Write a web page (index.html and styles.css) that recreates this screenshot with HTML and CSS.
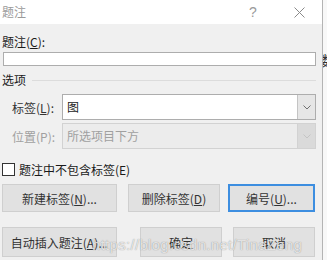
FILE: index.html
```html
<!DOCTYPE html>
<html>

<head>
    <title>题注</title>
    <link rel="stylesheet" href="styles.css">
</head>

<body>
    <div class="screen">
        <div class="dialog">
            <div class="titlebar">
                <span class="title">题注</span>
                <span class="help">?</span>
                <span class="close">
                    <svg width="11" height="11" viewBox="0 0 11 11">
                        <path d="M0.5 0.5 L10.5 10.5 M10.5 0.5 L0.5 10.5" stroke="#8a8a8a" stroke-width="1" fill="none"/>
                    </svg>
                </span>
            </div>
            <div class="content">
                <div class="caption-label">题注(<u>C</u>):</div>
                <div class="caption-input"></div>

                <div class="section">
                    <span>选项</span>
                    <span class="section-line"></span>
                </div>

                <div class="option-row">
                    <span class="option-label">标签(<u>L</u>):</span>
                    <div class="select">
                        <span class="select-text">图</span>
                        <span class="select-btn">
                            <svg width="8" height="5" viewBox="0 0 8 5"><path d="M0.5 0.5 L4 4 L7.5 0.5" stroke="#707070" fill="none"/></svg>
                        </span>
                    </div>
                </div>
                <div class="option-row second disabled">
                    <span class="option-label">位置(P):</span>
                    <div class="select">
                        <span class="select-text">所选项目下方</span>
                        <span class="select-btn">
                            <svg width="8" height="5" viewBox="0 0 8 5"><path d="M0.5 0.5 L4 4 L7.5 0.5" stroke="#c4c4c4" fill="none"/></svg>
                        </span>
                    </div>
                </div>

                <div class="check-row">
                    <span class="checkbox"></span>
                    <span>题注中不包含标签(E)</span>
                </div>

                <div class="button-row first">
                    <div class="btn b-new">新建标签(<u>N</u>)...</div>
                    <div class="btn b-del">删除标签(<u>D</u>)</div>
                    <div class="btn b-num focused">编号(<u>U</u>)...</div>
                </div>
                <div class="button-row last">
                    <div class="btn b-auto">自动插入题注(<u>A</u>)...</div>
                    <div class="btn b-ok">确定</div>
                    <div class="btn b-cancel">取消</div>
                </div>

                <div class="watermark">https://blog.csdn.net/TinaZeng</div>
            </div>
        </div>
        <div class="outside">
            <span class="peek">数</span>
        </div>
    </div>
</body>

</html>
```

FILE: styles.css
```css
body {
    margin: 0;
    font-family: "Noto Sans CJK SC", "Liberation Sans", sans-serif;
    font-size: 12px;
    color: #1a1a1a;
}

.screen {
    display: flex;
    width: 327px;
    height: 260px;
    overflow: hidden;
}

.dialog {
    width: 322px;
    height: 260px;
    background: #f0f0f0;
    border-right: 1px solid #b4b4b4;
    display: flex;
    flex-direction: column;
}

.titlebar {
    height: 24px;
    background: #fff;
    display: flex;
    align-items: center;
    padding-right: 8px;
}

.title {
    flex: 1;
    padding-left: 2px;
    color: #9a9a9a;
    line-height: 14px;
}

.help {
    width: 30px;
    text-align: center;
    color: #9a9a9a;
    font-family: "Liberation Sans", sans-serif;
    font-size: 14px;
    font-weight: 300;
}

.close {
    width: 30px;
    margin-left: 16px;
    display: flex;
    justify-content: center;
}

.content {
    position: relative;
    flex: 1;
    padding: 0 6px 0 2px;
}

.caption-label {
    margin-top: 11px;
    line-height: 14px;
}

.caption-input {
    margin: 3px 0 0 1px;
    height: 12px;
    background: #fff;
    border: 1px solid #adadad;
}

.section {
    margin-top: 7px;
    display: flex;
    align-items: center;
    line-height: 14px;
}

.section-line {
    flex: 1;
    margin-left: 6px;
    border-top: 1px solid #dcdcdc;
}

.option-row {
    margin-top: 7px;
    display: flex;
    align-items: center;
    height: 26px;
}

.option-row.second {
    margin-top: 3px;
}

.option-label {
    width: 50px;
    padding-left: 10px;
    color: #333;
}

.select {
    flex: 1;
    height: 24px;
    display: flex;
    background: #fff;
    border: 1px solid #adadad;
}

.select-text {
    flex: 1;
    padding-left: 4px;
    line-height: 24px;
}

.select-btn {
    width: 17px;
    background: #e6e6e6;
    border-left: 1px solid #c4c4c4;
    display: flex;
    align-items: center;
    justify-content: center;
}

.disabled .option-label,
.disabled .select-text {
    color: #a0a0a0;
}

.disabled .select {
    background: #ececec;
    border-color: #d2d2d2;
}

.disabled .select-btn {
    background: #dadada;
    border-left-color: #d2d2d2;
}

.check-row {
    margin-top: 13px;
    display: flex;
    align-items: center;
    height: 14px;
}

.checkbox {
    width: 11px;
    height: 11px;
    background: #fff;
    border: 1px solid #333;
    margin-right: 4px;
}

.button-row {
    display: flex;
}

.button-row.first {
    margin-top: 8px;
    height: 28px;
}

.button-row.last {
    margin-top: 15px;
    height: 30px;
}

.btn {
    box-sizing: border-box;
    height: 100%;
    display: flex;
    align-items: center;
    justify-content: center;
    background: #e1e1e1;
    border: 1px solid #cfcfcf;
    color: #333;
}

.btn.focused {
    border: 2px solid #3d8ee0;
}

.b-new,
.b-auto {
    width: 115px;
}

.b-del {
    width: 92px;
    margin-left: 11px;
}

.b-num {
    width: 87px;
    margin-left: 8px;
}

.b-ok {
    width: 82px;
    margin-left: 23px;
}

.b-cancel {
    width: 82px;
    margin-left: 11px;
}

.watermark {
    position: absolute;
    left: 92px;
    bottom: 7px;
    font-family: "Liberation Sans", sans-serif;
    font-size: 15px;
    letter-spacing: 0.3px;
    color: rgba(255, 255, 255, 0.75);
    text-shadow: 0 0 1px rgba(60, 60, 60, 0.6);
    white-space: nowrap;
}

.outside {
    flex: 1;
    background: #f8f8f8;
    overflow: hidden;
}

.peek {
    display: block;
    margin-top: 50px;
    margin-left: -2px;
    font-size: 14px;
    color: #333;
}
```
